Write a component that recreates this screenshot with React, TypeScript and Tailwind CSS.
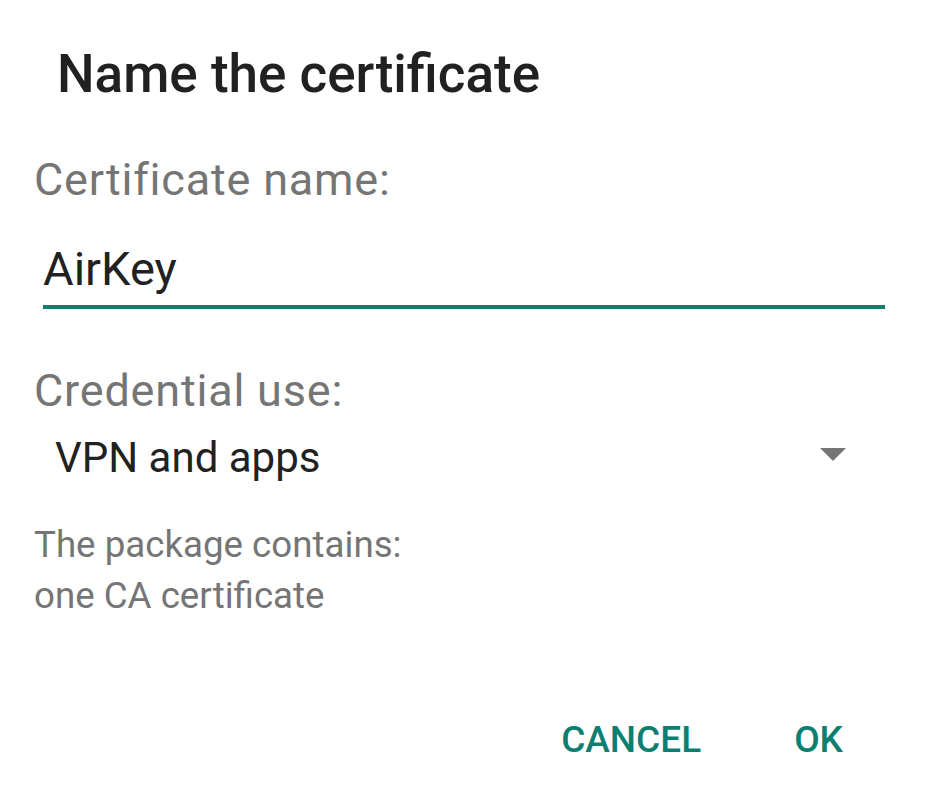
import React from "react";

export default function App() {
  return (
    <div className="w-[926px] h-[802px] bg-white flex flex-col" style={{ fontFamily: "Roboto, 'Noto Sans', sans-serif" }}>
      <div className="pl-[57px] pt-[42px] text-[53px] leading-[64px] font-medium text-[#212121]">Name the certificate</div>
      <div className="pl-[34px] pt-[48px] text-[45px] leading-[52px] tracking-[0.8px] text-[#757575]">Certificate name:</div>
      <div className="pl-[43px] pr-[41px] pt-[35px]">
        <div className="text-[47px] leading-[56px] text-[#212121] pb-[8px]">AirKey</div>
        <div className="h-[4px] bg-[#0d7f71]" />
      </div>
      <div className="pl-[34px] pt-[56px] text-[45px] leading-[52px] tracking-[0.8px] text-[#757575]">Credential use:</div>
      <div className="pl-[55px] pr-[80px] pt-[15px] flex items-start justify-between">
        <span className="text-[42px] leading-[52px] text-[#212121]">VPN and apps</span>
        <svg className="mt-[16px]" width="26" height="13" viewBox="0 0 26 13"><polygon points="0,0 26,0 13,13" fill="#757575" /></svg>
      </div>
      <div className="pl-[34px] pt-[35px] text-[36.7px] leading-[51px] text-[#757575]">
        <div>The package contains:</div>
        <div>one CA certificate</div>
      </div>
      <div className="flex justify-end pr-[83px] pt-[97px] gap-[93px] text-[37px] leading-[44px] font-medium text-[#0d7f71]">
        <span>CANCEL</span>
        <span>OK</span>
      </div>
    </div>
  );
}
